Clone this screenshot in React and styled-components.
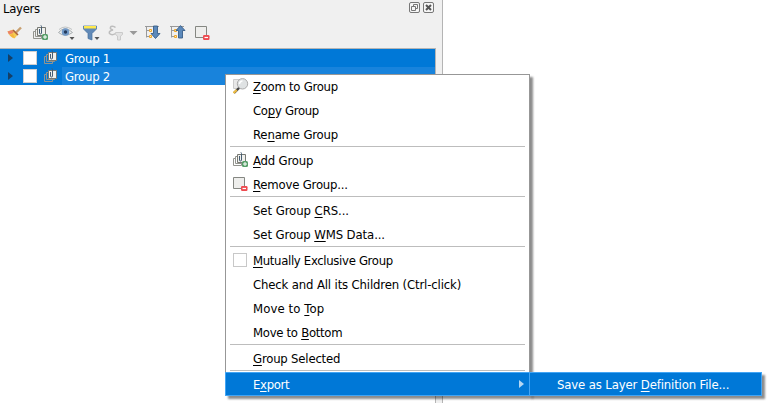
import React from "react";
import styled, { createGlobalStyle } from "styled-components";

const Global = createGlobalStyle`
  *{box-sizing:border-box}
  body{margin:0;background:#fff;overflow:hidden;font-family:"DejaVu Sans Condensed","DejaVu Sans",sans-serif;font-stretch:condensed;font-size:13px;color:#000}
  svg{display:block}
`;
const Screen = styled.div`position:relative;width:767px;height:403px;background:#fff;`;
const Dock = styled.section`width:443px;height:403px;background:#f0f0f0;border-right:1px solid #b4b4b4;display:flex;flex-direction:column;`;
const TitleBar = styled.header`height:18px;display:flex;align-items:center;padding:0 8px 0 3px;`;
const Title = styled.h1`margin:0;flex:1;font-size:inherit;font-weight:400;line-height:18px;letter-spacing:-.3px;`;
const DockButtons = styled.div`display:flex;gap:3px;margin-top:-3px;`;
const Toolbar = styled.div`height:30px;display:flex;align-items:center;padding-left:7px;`;
const Tool = styled.div`width:${p => p.$w}px;height:16px;`;
const Tree = styled.div`flex:1;width:436px;background:#fff;border-top:1px solid #b5b5b5;border-right:1px solid #b5b5b5;`;
const TreeRow = styled.div`height:18px;display:flex;align-items:center;background:#0078d7;color:#fff;`;
const Arrow = styled.div`width:23px;padding-left:8px;`;
const Check = styled.div`width:14px;height:14px;background:#fff;border:1px solid #d0d0d0;`;
const GroupIcon = styled.div`margin-left:7px;width:18px;`;
const Name = styled.div`flex:1;height:18px;line-height:20px;padding-left:3px;letter-spacing:-.25px;background:${p => (p.$hover ? "#1883dc" : "transparent")};`;
const Menu = styled.div`position:absolute;left:225px;top:74px;width:305px;height:322px;background:#fff;box-shadow:inset 0 0 0 1px #979797,3px 3px 2px rgba(0,0,0,.45);`;
const SubMenu = styled.div`position:absolute;left:529px;top:372px;width:233px;height:24px;box-shadow:3px 3px 2px rgba(0,0,0,.45);`;
const Item = styled.div`height:24px;display:flex;align-items:center;
  color:${p => (p.$on ? "#fff" : "#000")};background:${p => (p.$on ? "#0078d7" : "transparent")};border:${p => (p.$on ? "1px solid #42a5f5" : "0")};
  padding-left:${p => (p.$on ? 7 : 8)}px;`;
const IconCell = styled.div`width:20px;height:16px;`;
const Label = styled.div`flex:1;white-space:pre;line-height:24px;padding-top:1px;letter-spacing:${p => p.$ls}px;u{text-underline-offset:2px;text-decoration-thickness:1px;text-decoration-skip-ink:none}`;
const Separator = styled.div`height:2px;margin:0 5px;border-top:1px solid #bdbdbd;`;
const MenuCheck = styled.div`width:14px;height:14px;border:1px solid #c8c8c8;background:#fff;margin-top:1px;`;
const SubArrow = styled.div`width:10px;`;

const Tri = ({ fill }) => <svg width="5" height="8"><path d="M0 0L5 4L0 8Z" fill={fill} /></svg>;
const Plus = () => <g><rect x="9" y="9" width="6" height="6" rx="1.5" fill="#579f69" /><path d="M10 12h4M12 10v4" stroke="#fff" /></g>;
const Minus = () => <g><rect x="8" y="10" width="6.5" height="5" rx="1.2" fill="#ee4b50" /><path d="M9.5 12.5h3.5" stroke="#fff" strokeWidth="1.2" /></g>;
const Stack = ({ plus }) => (
  <svg width="16" height="16">
    <path d="M3 6.5H.5v7h8V12M5 4.5H2.5v7h8V10" fill="none" stroke="#93948e" />
    <path d="M4.5 2.5h8v8h-8z" fill="#f0f0ed" stroke="#777973" />
    <path d="M6.5 4v4q0 1 1 1t1-1V1.5q0-1-.8-1" fill="none" stroke="#465d72" />
    {plus && <Plus />}
  </svg>
);
const Remove = () => <svg width="16" height="16"><path d="M.5 1.5h11v11h-11z" fill="#eeeeec" stroke="#858782" /><Minus /></svg>;
const Zoom = () => (
  <svg width="16" height="16">
    <path d="M.5 1.5h7v9h-7z" fill="#e8e8e8" stroke="#ccc" />
    <path d="M6.5 9.5L1 15" stroke="#444" strokeWidth="2.4" /><path d="M3.8 12L.5 15" stroke="#edbc43" strokeWidth="2.2" />
    <circle cx="9.5" cy="5.8" r="5.2" fill="#dfe2e3" stroke="#aaa" /><path d="M6.5 6a3 3 0 0 1 3-3" fill="none" stroke="#fff" strokeWidth="1.5" />
  </svg>
);
const Brush = () => (
  <svg width="16" height="16">
    <path d="M9 7.5L14 2.5" stroke="#c9a071" strokeWidth="2.4" />
    <path d="M.5 6.5L6 4.5L11 9.5L7.5 13.5Q3 12.5.5 6.5Z" fill="#f4cd54" /><path d="M.5 6.5L5.5 5L6.5 8L2 9.5Z" fill="#ec8368" />
    <path d="M2.5 10L6 9L8 13Q5 13 2.5 10Z" fill="#f6b43d" /><path d="M6 5L11 10" stroke="#a9603c" strokeWidth="1.6" />
  </svg>
);
const Eye = () => (
  <svg width="18" height="16">
    <path d="M.5 7.5Q7 0 14.5 7.5Q7 13 .5 7.5Z" fill="#eef0f0" stroke="#a7adaf" /><path d="M1 4.5Q7-.5 14 4.5" fill="none" stroke="#c0c3c4" />
    <circle cx="7.5" cy="7" r="3.8" fill="#7199c7" /><circle cx="7.5" cy="7" r="1.7" fill="#243b5c" /><path d="M11.5 12h5l-2.5 3z" fill="#555" />
  </svg>
);
const Filter = () => (
  <svg width="18" height="16">
    <path d="M.5 1h13v3L9 8.5V15l-4-1.5v-5L.5 4Z" fill="#6189b7" stroke="#46709f" strokeWidth=".7" /><path d="M1 1h12v2.5h-12z" fill="#ffe94d" />
    <path d="M11.5 12h5l-2.5 3z" fill="#555" />
  </svg>
);
const Epsilon = () => (
  <svg width="30" height="16">
    <path d="M7.5 2.5Q5.5.5 3 1.5Q1 4 5 5Q.5 6 1.5 8.5Q4 11 7.5 8.5" fill="none" stroke="#bdbdbd" strokeWidth="1.5" />
    <path d="M7.5 7.5h7v2l-2 1.5v4h-3v-4l-2-1.5z" fill="#e2e2e2" stroke="#cacaca" /><path d="M21.5 6h8l-4 4z" fill="#999" />
  </svg>
);
const TreeIcon = ({ up }) => (
  <svg width="16" height="16">
    <path d="M0 1.5h14M1.5 1.5v11M1.5 5.5h3M1.5 11.5h3" fill="none" stroke="#999" />
    <path d="M4.5 4.5h2v2h-2zM4.5 10.5h2v2h-2z" fill="#fff3b0" stroke="#f1a62c" />
    <path d={up ? "M8.5 13V5.5H6L10.5.6L15 5.5h-2.5V13z" : "M8.5 1v7.5H6l4.5 5L15 8.5h-2.5V1z"} fill="#5c89bb" stroke="#395f89" strokeWidth=".9" />
  </svg>
);
const WinIcon = ({ close }) => (
  <svg width="11" height="11">
    <rect x=".5" y=".5" width="10" height="10" rx="1.5" fill="#f6f6f6" stroke="#777" />
    {close ? <path d="M3 3l5 5M8 3L3 8" stroke="#555" strokeWidth="2" /> : <path d="M4.5 4V2.5h4v4H7M2.5 4.5h4v4h-4z" fill="none" stroke="#777" />}
  </svg>
);

const items = [
  ["", "Z", "oom to Group", -.28, <Zoom />], ["Co", "p", "y Group", -.3], ["Re", "n", "ame Group", -.18], null,
  ["", "A", "dd Group", -.2, <Stack plus />], ["", "R", "emove Group...", -.2, <Remove />], null,
  ["Set Group ", "C", "RS...", -.07], ["Set Group ", "W", "MS Data...", -.1], null,
  ["", "M", "utually Exclusive Group", -.33, <MenuCheck />], ["Check and All its Children (Ctrl-click)", "", "", -.15],
  ["Move to ", "T", "op", .1], ["Move to ", "B", "ottom", -.3], null,
  ["", "G", "roup Selected", -.2], null, ["E", "x", "port", -.35, null, true],
];

export default function App() {
  return (
    <Screen>
      <Global />
      <Dock>
        <TitleBar><Title>Layers</Title><DockButtons><WinIcon /><WinIcon close /></DockButtons></TitleBar>
        <Toolbar>
          <Tool $w={26}><Brush /></Tool><Tool $w={25}><Stack plus /></Tool><Tool $w={25}><Eye /></Tool><Tool $w={25}><Filter /></Tool>
          <Tool $w={37}><Epsilon /></Tool><Tool $w={25}><TreeIcon /></Tool><Tool $w={25}><TreeIcon up /></Tool><Tool $w={16}><Remove /></Tool>
        </Toolbar>
        <Tree>
          {[1, 2].map(n => (
            <TreeRow key={n}><Arrow><Tri fill="#153f66" /></Arrow><Check /><GroupIcon><Stack /></GroupIcon><Name $hover={n === 2}>Group {n}</Name></TreeRow>
          ))}
        </Tree>
      </Dock>
      <Menu>
        {items.map((it, i) => it ? (
          <Item key={i} $on={it[5]}><IconCell>{it[4]}</IconCell><Label $ls={it[3]}>{it[0]}<u>{it[1]}</u>{it[2]}</Label>{it[5] && <SubArrow><Tri fill="#b5d7f3" /></SubArrow>}</Item>
        ) : <Separator key={i} />)}
      </Menu>
      <SubMenu><Item $on><IconCell /><Label $ls={-.14}>Save as Layer <u>D</u>efinition File...</Label></Item></SubMenu>
    </Screen>
  );
}
